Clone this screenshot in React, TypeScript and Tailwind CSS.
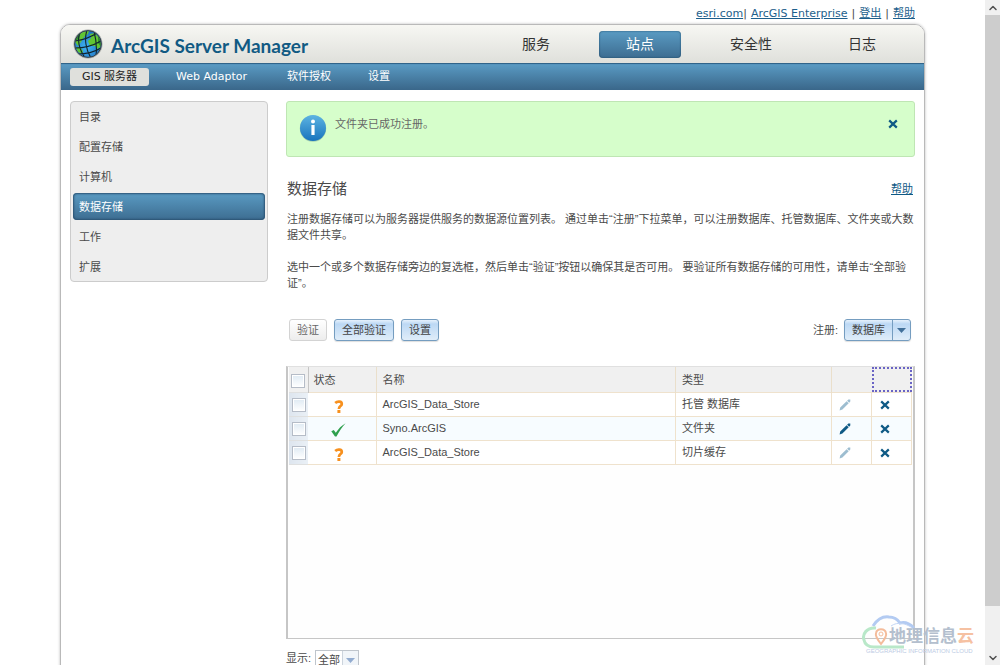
import React, { useState } from 'react';
import { ChevronDown, ChevronUp } from 'lucide-react';

type Status = 'unknown' | 'valid';

interface DataStore {
  id: number;
  status: Status;
  name: string;
  type: string;
  editable: boolean;
}

const mainTabs = ['服务', '站点', '安全性', '日志'];
const sideItems = ['目录', '配置存储', '计算机', '数据存储', '工作', '扩展'];

const stores: DataStore[] = [
  { id: 1, status: 'unknown', name: 'ArcGIS_Data_Store', type: '托管 数据库', editable: false },
  { id: 2, status: 'valid', name: 'Syno.ArcGIS', type: '文件夹', editable: true },
  { id: 3, status: 'unknown', name: 'ArcGIS_Data_Store', type: '切片缓存', editable: false },
];

const Globe = () => (
  <svg width="30" height="30" viewBox="0 0 30 30" aria-hidden="true">
    <defs>
      <radialGradient id="sea" cx="45%" cy="60%" r="60%">
        <stop offset="0" stopColor="#3fb6f4" />
        <stop offset="1" stopColor="#1f6fbf" />
      </radialGradient>
      <clipPath id="ball">
        <circle cx="15" cy="15" r="13" />
      </clipPath>
    </defs>
    <circle cx="15" cy="15" r="14.5" fill="#a4a7a3" />
    <circle cx="15" cy="15" r="13.5" fill="url(#sea)" />
    <g clipPath="url(#ball)">
      <path d="M2 13 4 6l6-4 6 0-1 3-4 3-3 5-3 4zM17 5l5-1 5 6 1 7-3 3-3-3-5 0-2-5 3-3zM3 18l4 0 3 4-1 3-4-2z" fill="#62c534" />
      <path d="M2 12 4 6l4-3-2 7zM25 7l4 6-1 5-3-4z" fill="#2f8b30" />
      <path d="M7 3C4 11 6 20 12 29M14 1c-3 9-1 20 4 28M21 2c2 8 3 17 2 24M2 12C10 11 18 8 24 4M2 19c10 0 19-3 26-7M5 25c8 0 16-2 23-6" fill="none" stroke="#10242f" strokeWidth="1.1" />
    </g>
    <circle cx="15" cy="15" r="13.4" fill="none" stroke="#3a454b" strokeWidth="1" />
  </svg>
);

const InfoIcon = () => (
  <svg width="28" height="28" viewBox="0 0 28 28" aria-hidden="true">
    <defs>
      <linearGradient id="info" x1="0" y1="0" x2="0" y2="1">
        <stop offset="0" stopColor="#5db4e2" />
        <stop offset="1" stopColor="#1873bd" />
      </linearGradient>
    </defs>
    <circle cx="14" cy="14.6" r="13.2" fill="#a5cfae" />
    <circle cx="14" cy="14" r="13" fill="url(#info)" />
    <circle cx="14" cy="7.6" r="2" fill="#fff" />
    <path d="M12.4 11h3.2v10h-3.2z" fill="#fff" />
  </svg>
);

const Cross = () => (
  <svg width="10" height="10" viewBox="0 0 10 10" aria-hidden="true">
    <path d="M1.2 1.4 8.8 8.6M8.8 1.4 1.2 8.6" stroke="#0f5a85" strokeWidth="2.2" />
  </svg>
);

const Pencil = ({ enabled }: { enabled: boolean }) => (
  <svg width="12" height="12" viewBox="0 0 12 12" aria-hidden="true" fill={enabled ? '#0f5a85' : '#9dbdd0'}>
    <path d="M.6 11.4 1.2 8.6 7.6 2.2 9.7 4.2 3.4 10.6zM8.1 1.7 9.4.6 11.3.6 11.3 2.5 10.2 3.7z" />
  </svg>
);

const StatusIcon = ({ status }: { status: Status }) =>
  status === 'valid' ? (
    <svg width="15" height="14" viewBox="0 0 15 14" aria-hidden="true">
      <path d="M.3 8.2 2.8 7 4.8 9.8C7.6 5.6 10.4 2.6 14.6.2 11 4 8 8.5 5.5 13.6L4 13.6z" fill="#2fa04e" />
    </svg>
  ) : (
    <svg width="10" height="13" viewBox="0 0 10 13" aria-hidden="true">
      <path d="M1.2 2.9C3.4.9 7.8 1 7.8 3.9 7.8 6.2 4.9 5.9 4.9 9" fill="none" stroke="#f7901e" strokeWidth="2.7" />
      <path d="M3.4 10h3v3h-3z" fill="#f7901e" />
    </svg>
  );

const Arrow = ({ color }: { color: string }) => (
  <svg width="9" height="5" viewBox="0 0 9 5" aria-hidden="true">
    <path d="M0 0h9L4.5 5z" fill={color} />
  </svg>
);

const CheckBox = ({ label }: { label: string }) => (
  <input
    type="checkbox"
    aria-label={label}
    className="block mx-auto size-[14px] appearance-none border border-[#b5bcc7] bg-linear-to-b from-[#dfeaf3] to-white shadow-[inset_0_0_0_1px_#fff] checked:bg-[#5a8fb8]"
  />
);

const blueButton =
  'h-[22px] border border-[#759dc0] rounded-[3px] bg-linear-to-b from-[#e6f1fc] via-[#bcd8f4] via-20% to-[#e0edf9] text-[#444] shadow-[0_1px_1px_#0002]';

const Watermark = () => (
  <div className="absolute right-[22px] bottom-[10px] w-[116px] h-[42px] pointer-events-none">
    <svg className="absolute left-0 top-0" width="56" height="38" viewBox="0 0 56 38" aria-hidden="true" fill="none">
      <path d="M11 13C15 7 20 3 27 4c6 0 9 3 11 6 6-2 11 2 14 5" stroke="#b3cbf2" strokeWidth="3" />
      <path d="M29 13c7-5 15-2 20 1" stroke="#c3d6f5" strokeWidth="1" />
      <path d="M14 15C5 14 0 21 2 27c1 5 5 7 10 7h30" stroke="#b9e8c9" strokeWidth="3" />
      <path d="M19 31c-4-5-6-8-5-11 1-5 9-5 10 0 1 3-1 6-5 11z" stroke="#f4bc9b" strokeWidth="2" />
      <circle cx="19" cy="21" r="2" stroke="#f4bc9b" strokeWidth="1" />
    </svg>
    <div className="absolute left-[27px] top-[13px] text-[17px] leading-[22px] font-bold whitespace-nowrap text-[#b4bfce]">
      地理信息<span className="text-[#f6c1a2]">云</span>
    </div>
    <div className="absolute left-1 top-[34px] text-[6px] leading-[8px] whitespace-nowrap text-[#bccbe4]">GEOGRAPHIC INFORMATION CLOUD</div>
  </div>
);

export default function App() {
  const [activeTab, setActiveTab] = useState('站点');
  const [activeItem, setActiveItem] = useState('数据存储');
  const [showAlert, setShowAlert] = useState(true);

  return (
    <div className="relative flex h-screen overflow-hidden bg-white text-[11px] leading-4 text-[#4a4a4a] font-['Liberation_Sans','Noto_Sans_CJK_SC',sans-serif]">
      <div className="flex-1 px-[60px]">
        <div className="flex justify-end gap-1 h-6 pt-[6px] pr-[10px] font-['DejaVu_Sans','Noto_Sans_CJK_SC',sans-serif]">
          <span><a href="#esri" className="underline text-[#1d5f8c]">esri.com</a>|</span>
          <a href="#enterprise" className="underline text-[#1d5f8c]">ArcGIS Enterprise</a>
          <span>|</span>
          <a href="#logout" className="underline text-[#1d5f8c]">登出</a>
          <span>|</span>
          <a href="#help" className="underline text-[#1d5f8c]">帮助</a>
        </div>

        <div className="min-h-screen border border-[#b9b9b9] rounded-t-[10px] shadow-[0_0_3px_#0004]">
          <header className="flex items-center h-[38px] pl-3 pr-[21px] rounded-t-[9px] bg-linear-to-b from-[#f7f7f3] to-[#dfe0db]">
            <Globe />
            <h1 className="ml-2 pt-1 text-[19px] leading-6 font-bold text-[#115a83] whitespace-nowrap font-['Lato',sans-serif]">ArcGIS Server Manager</h1>
            <nav className="flex ml-auto gap-[22px]">
              {mainTabs.map(tab => (
                <button
                  key={tab}
                  type="button"
                  onClick={() => setActiveTab(tab)}
                  className={`px-[27px] h-[27px] rounded-[4px] text-[14px] leading-5 ${activeTab === tab ? 'text-white bg-linear-to-b from-[#5a9bc3] to-[#3d6d91] shadow-[inset_0_0_2px_#16405f]' : 'text-[#333]'}`}
                >
                  {tab}
                </button>
              ))}
            </nav>
          </header>

          <nav className="flex items-center h-[27px] pl-[9px] text-white bg-linear-to-b from-[#5b9dc6] to-[#3a678a] shadow-[inset_0_1px_1px_#2c5f83] font-['DejaVu_Sans','Noto_Sans_CJK_SC',sans-serif]">
            <a href="#server" className="w-[79px] h-[18px] leading-[18px] text-center rounded-[3px] bg-[#dfe0dc] text-[#222]">GIS 服务器</a>
            <a href="#adaptor" className="ml-[27px]">Web Adaptor</a>
            <a href="#license" className="ml-10">软件授权</a>
            <a href="#settings" className="ml-[37px]">设置</a>
          </nav>

          <div className="flex items-start gap-[18px] pt-[11px] px-[9px]">
            <aside className="shrink-0 w-[198px] px-[2px] py-[1px] flex flex-col gap-[3px] border border-[#ccc] rounded-[4px] bg-[#eee]">
              {sideItems.map(item => (
                <button
                  key={item}
                  type="button"
                  onClick={() => setActiveItem(item)}
                  className={`h-[27px] pl-[6px] text-left rounded-[4px] ${activeItem === item ? 'text-white bg-linear-to-b from-[#5a9bc3] to-[#3d6d91] shadow-[inset_0_0_2px_1px_#2a5272]' : ''}`}
                >
                  {item}
                </button>
              ))}
            </aside>

            <main className="flex-1 min-w-0">
              {showAlert && (
                <div className="flex items-start h-[56px] pl-3 pr-4 border border-[#bfe6b4] rounded-[3px] bg-[#d6fecb]">
                  <span className="mt-3"><InfoIcon /></span>
                  <p className="ml-2 mt-[14px] text-[#666]">文件夹已成功注册。</p>
                  <button type="button" aria-label="关闭" onClick={() => setShowAlert(false)} className="ml-auto mt-[17px]">
                    <Cross />
                  </button>
                </div>
              )}

              <div className="flex items-center justify-between mt-[22px] h-5 pl-[1px] pr-[2px]">
                <h2 className="text-[15px] leading-5">数据存储</h2>
                <a href="#help" className="underline text-[#0f5a85]">帮助</a>
              </div>

              <div className="mt-3 pl-[1px] space-y-4 whitespace-nowrap">
                <p>
                  注册数据存储可以为服务器提供服务的数据源位置列表。 通过单击“注册”下拉菜单，可以注册数据库、托管数据库、文件夹或大数
                  <br />
                  据文件共享。
                </p>
                <p>
                  选中一个或多个数据存储旁边的复选框，然后单击“验证”按钮以确保其是否可用。 要验证所有数据存储的可用性，请单击“全部验
                  <br />
                  证”。
                </p>
              </div>

              <div className="flex items-center mt-7 pl-[3px] pr-1">
                <button type="button" disabled className="w-[38px] h-[22px] border border-[#d3d3d3] rounded-[3px] bg-linear-to-b from-white to-[#ededed] text-[#666]">验证</button>
                <button type="button" className={`ml-[7px] w-[60px] ${blueButton}`}>全部验证</button>
                <button type="button" className={`ml-[7px] w-[38px] ${blueButton}`}>设置</button>
                <span className="ml-auto mr-[6px]">注册:</span>
                <div className={`flex w-[67px] ${blueButton}`}>
                  <button type="button" className="flex-1">数据库</button>
                  <button type="button" aria-label="更多" className="w-[18px] flex items-center justify-center border-l border-[#759dc0]">
                    <Arrow color="#42709a" />
                  </button>
                </div>
              </div>

              <div className="mt-[25px] h-[273px] px-[1px] border-x-2 border-y border-[#c6c6c6] border-t-[#e0e0e0] bg-[#fefefe]">
                <table className="w-full table-fixed border-collapse">
                  <colgroup>
                    <col className="w-[19px]" />
                    <col className="w-[68px]" />
                    <col />
                    <col className="w-[156px]" />
                    <col className="w-[40px]" />
                    <col className="w-[40px]" />
                  </colgroup>
                  <thead>
                    <tr className="h-[25px] bg-[#f0f0f0] text-left">
                      <th className="border-r border-[#c5c5c5] pt-[3px]"><CheckBox label="全选" /></th>
                      <th className="pl-[5px] font-normal border-r border-[#eadfcb]">状态</th>
                      <th className="pl-[6px] font-normal border-r border-[#eadfcb]">名称</th>
                      <th className="pl-[6px] font-normal border-r border-[#eadfcb]">类型</th>
                      <th></th>
                      <th className="p-0"><div className="h-[25px] border-2 border-dotted border-[#6a64c4]"></div></th>
                    </tr>
                  </thead>
                  <tbody>
                    {stores.map(store => (
                      <tr key={store.id} className="h-6 bg-white even:bg-[#f7fcff]">
                        <td className="border-y border-[#dfe0e0] bg-linear-to-r from-[#dde5ee] to-[#eaf0f6]"><CheckBox label={store.name} /></td>
                        <td className="border border-l-0 border-[#efe2cd] pr-[6px] pt-[3px]">
                          <div className="flex justify-center"><StatusIcon status={store.status} /></div>
                        </td>
                        <td className="border border-[#efe2cd] pl-[6px] pb-[1px]">{store.name}</td>
                        <td className="border border-[#efe2cd] pl-[6px] pb-[1px]">{store.type}</td>
                        <td className="border border-[#efe2cd] pl-[7px]">
                          <button type="button" aria-label="编辑" disabled={!store.editable} className="block"><Pencil enabled={store.editable} /></button>
                        </td>
                        <td className="border border-[#efe2cd] pl-2">
                          <button type="button" aria-label="删除" className="block"><Cross /></button>
                        </td>
                      </tr>
                    ))}
                  </tbody>
                </table>
              </div>

              <div className="flex items-start mt-[11px]">
                <label htmlFor="show">显示:</label>
                <div className="relative ml-1 w-[44px] h-5 border border-[#bfc5cc]">
                  <select id="show" className="block w-full h-full pl-[2px] appearance-none bg-white">
                    <option>全部</option>
                  </select>
                  <span className="absolute right-0 inset-y-0 w-4 flex items-center justify-center border-l border-[#ccd4dd] bg-[#f1f5f9] pointer-events-none">
                    <Arrow color="#93acd0" />
                  </span>
                </div>
              </div>
            </main>
          </div>
        </div>
      </div>

      {/* Scroll bar */}
      <div className="shrink-0 w-[15px] flex flex-col bg-[#f0f0f0] text-[#505050]">
        <button type="button" aria-label="向上" className="h-[15px] flex items-center justify-center"><ChevronUp size={12} strokeWidth={3} /></button>
        <div className="flex-1">
          <div className="h-[93%] bg-[#cdcdcd]"></div>
        </div>
        <button type="button" aria-label="向下" className="h-[15px] flex items-center justify-center"><ChevronDown size={12} strokeWidth={3} /></button>
      </div>

      <Watermark />
    </div>
  );
}
